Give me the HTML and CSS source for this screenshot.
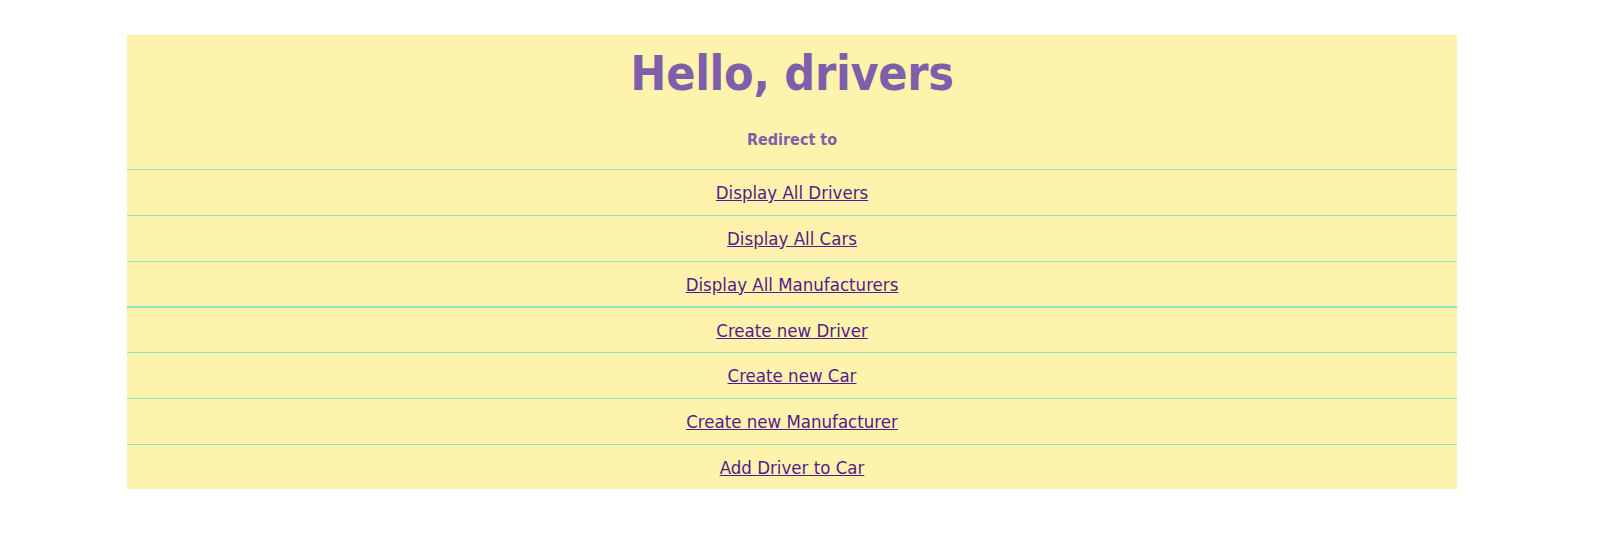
FILE: index.html
```html
<!DOCTYPE html>
<html>
<head>
<meta charset="utf-8">
<title>Hello, drivers</title>
<link rel="stylesheet" href="styles.css">
</head>
<body>
<div class="panel">
  <div class="header">
    <h1 class="title">Hello, drivers</h1>
    <h3 class="subtitle">Redirect to</h3>
  </div>
  <div class="row"><a class="link" href="#">Display All Drivers</a></div>
  <div class="row"><a class="link" href="#">Display All Cars</a></div>
  <div class="row row-short"><a class="link" href="#">Display All Manufacturers</a></div>
  <div class="row row-short row-thick"><a class="link" href="#">Create new Driver</a></div>
  <div class="row"><a class="link" href="#">Create new Car</a></div>
  <div class="row"><a class="link" href="#">Create new Manufacturer</a></div>
  <div class="row row-short"><a class="link" href="#">Add Driver to Car</a></div>
</div>
</body>
</html>
```
FILE: styles.css
```css
html, body {
  margin: 0;
  padding: 0;
  background: #ffffff;
}

.panel {
  margin: 35px 0 0 127px;
  width: 1330px;
  background: #fef3ad;
  font-family: "DejaVu Sans Condensed", "DejaVu Sans", sans-serif;
  display: flex;
  flex-direction: column;
}

.header {
  height: 134px;
  box-sizing: border-box;
  padding-top: 10px;
  display: flex;
  flex-direction: column;
  align-items: center;
}

.title {
  margin: 0;
  font-size: 48px;
  font-weight: bold;
  line-height: 56px;
  color: #7e5faa;
  letter-spacing: -0.3px;
}

.subtitle {
  margin: 29px 0 0;
  font-size: 16px;
  font-weight: bold;
  line-height: 19px;
  color: #7e5faa;
}

.row {
  height: 45px;
  border-top: 1px solid #94e0c8;
  display: flex;
  align-items: center;
  justify-content: center;
}

.row-short {
  height: 44px;
}

.row-thick {
  border-top-width: 2px;
}

.link {
  font-size: 18.5px;
  color: #551a8b;
  text-decoration: underline;
}
```
